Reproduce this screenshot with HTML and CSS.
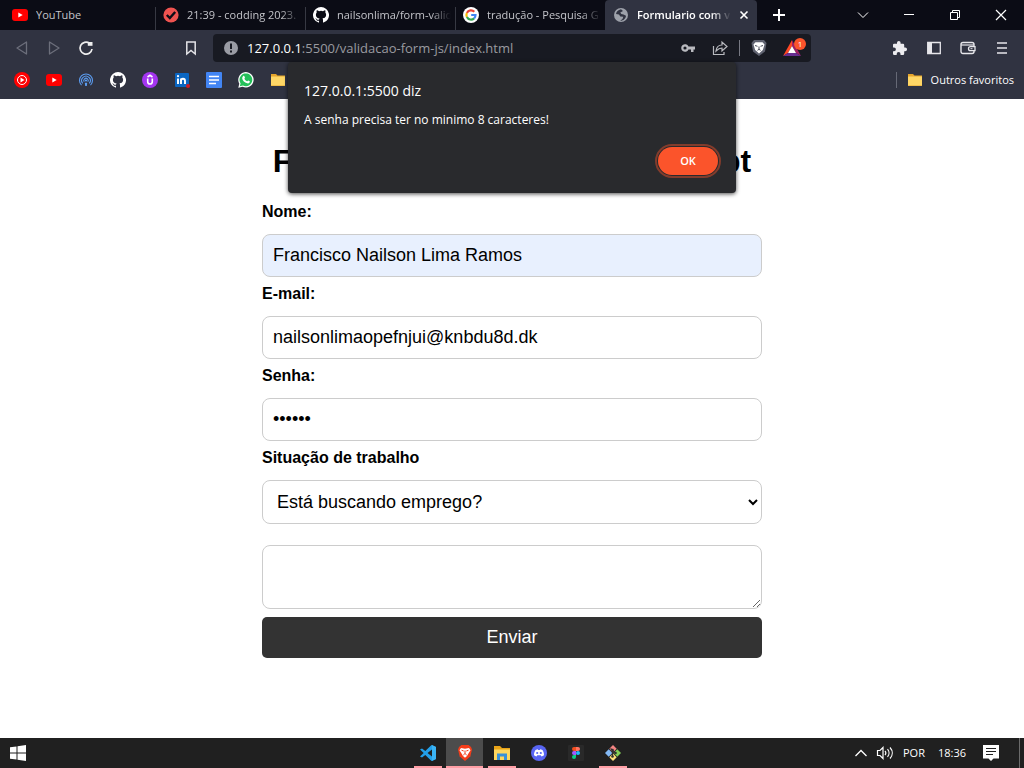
FILE: index.html
```html
<!DOCTYPE html>
<html lang="pt-BR">
<head>
<meta charset="utf-8">
<meta name="viewport" content="width=device-width, initial-scale=1">
<title>Formulario com validação</title>
<link rel="stylesheet" href="styles.css">
</head>
<body>
<header class="browser">
  <div class="tabstrip">
    <div class="tabs" role="tablist">
      <button class="tab tab-first" role="tab">
        <svg class="icon" viewBox="0 0 16 16"><rect y="2" width="16" height="12" rx="3" fill="#f00"/><path d="M6.3 5.5v5l4.4-2.5z" fill="#fff"/></svg>
        <span class="tab-title">YouTube</span>
      </button>
      <button class="tab" role="tab">
        <svg class="icon" viewBox="0 0 16 16"><circle cx="8" cy="8" r="7.6" fill="#ef5350"/><path d="M3.8 8l3 3 5.4-6" fill="none" stroke="#0c0d16" stroke-width="2.4"/></svg>
        <span class="tab-title fade">21:39 - codding 2023.</span>
      </button>
      <button class="tab" role="tab">
        <svg class="icon" viewBox="0 0 16 16"><path fill="#fff" d="M8 0a8 8 0 0 0-2.53 15.59c.4.07.55-.17.55-.38v-1.49C3.8 14.2 3.33 12.78 3.33 12.78c-.36-.92-.89-1.17-.89-1.17-.72-.5.06-.48.06-.48.8.05 1.22.82 1.22.82.71 1.22 1.87.87 2.33.66.07-.52.28-.87.5-1.07-1.77-.2-3.64-.89-3.64-3.95 0-.87.31-1.59.82-2.15-.08-.2-.36-1.02.08-2.12 0 0 .67-.21 2.2.82a7.7 7.7 0 0 1 4 0c1.53-1.04 2.2-.82 2.2-.82.44 1.1.16 1.92.08 2.12.51.56.82 1.27.82 2.15 0 3.07-1.87 3.75-3.65 3.95.29.25.54.73.54 1.48v2.19c0 .21.15.46.55.38A8 8 0 0 0 8 0z"/></svg>
        <span class="tab-title fade">nailsonlima/form-valid</span>
      </button>
      <button class="tab" role="tab">
        <svg class="icon" viewBox="0 0 16 16"><circle cx="8" cy="8" r="8" fill="#fff"/><g fill="none" stroke-width="2.2"><path d="M11.3 4.8A4.6 4.6 0 0 0 3.9 5.9" stroke="#ea4335"/><path d="M3.9 5.9a4.6 4.6 0 0 0 0 4.2" stroke="#fbbc05"/><path d="M3.9 10.1a4.6 4.6 0 0 0 7.2 1.3" stroke="#34a853"/><path d="M11.1 11.4A4.6 4.6 0 0 0 12.5 8H8.2" stroke="#4285f4"/></g></svg>
        <span class="tab-title fade">tradução - Pesquisa G</span>
      </button>
      <button class="tab tab-active" role="tab" aria-selected="true">
        <svg class="icon" viewBox="0 0 16 16"><circle cx="8" cy="8" r="7" fill="#9da1aa"/><path d="M8 2.2C5 3 3.5 4.500 3 7l3 .6 1.300 2 3 .2-.8 2.200-2.300 1.800c3 .2 5.600-2.200 5.800-5L10.500 7.600 8.300 7l-1-1.500L10 4z" fill="#303341"/></svg>
        <span class="tab-title fade">Formulario com v</span>
        <svg class="tab-close" viewBox="0 0 10 10"><path d="M1.500 1.500l7 7M8.500 1.500l-7 7" stroke="#fff" stroke-width="1.600"/></svg>
      </button>
    </div>
    <button class="new-tab" aria-label="Nova guia"><svg class="icon" viewBox="0 0 16 16"><path d="M8 2v12M2 8h12" stroke="#fff" stroke-width="2"/></svg></button>
    <div class="window-controls">
      <button aria-label="Pesquisar guias"><svg class="icon" viewBox="0 0 16 16"><path d="M3 5.500l5 5 5-5" fill="none" stroke="#fff"/></svg></button>
      <button aria-label="Minimizar"><svg class="icon" viewBox="0 0 16 16"><path d="M3 7.500h10" stroke="#fff"/></svg></button>
      <button aria-label="Restaurar"><svg class="icon" viewBox="0 0 16 16"><path d="M3.500 5.500h7v7h-7zM5.500 5.500v-2h7v7h-2" fill="none" stroke="#fff"/></svg></button>
      <button aria-label="Fechar"><svg class="icon" viewBox="0 0 16 16"><path d="M3 3l10 10M13 3L3 13" stroke="#fff" stroke-width="1.200"/></svg></button>
    </div>
  </div>

  <div class="toolbar">
    <div class="nav">
      <button aria-label="Voltar"><svg class="icon" viewBox="0 0 16 16"><path d="M12.500 2v12L3 8z" fill="none" stroke="#6c6f7b" stroke-width="1.300" stroke-linejoin="round"/></svg></button>
      <button aria-label="Avançar"><svg class="icon" viewBox="0 0 16 16"><path d="M3.500 2v12L13 8z" fill="none" stroke="#6c6f7b" stroke-width="1.300" stroke-linejoin="round"/></svg></button>
      <button aria-label="Recarregar"><svg class="icon" viewBox="0 0 16 16"><path d="M11.500 3.200A6 6 0 1 0 14 9" fill="none" stroke="#eee" stroke-width="1.700"/><path d="M9.800 5.800V2h4.700v3.800z" fill="#eee"/></svg></button>
    </div>
    <button class="bookmark-toggle" aria-label="Adicionar favorito"><svg class="icon" viewBox="0 0 16 16"><path d="M3.800 2h8.400v12L8 10.500 3.800 14z" fill="none" stroke="#e4e4e7" stroke-width="1.500"/></svg></button>
    <div class="address">
      <svg class="icon" viewBox="0 0 16 16"><circle cx="8" cy="8" r="7" fill="#9a9ca4"/><path d="M7 3.500h2V9H7zM7 10.500h2v2H7z" fill="#181a22"/></svg>
      <span class="url"><span class="host">127.0.0.1</span>:5500/validacao-form-js/index.html</span>
      <button aria-label="Senhas"><svg class="icon" viewBox="0 0 16 16"><path fill="#b9babf" fill-rule="evenodd" d="M8.500 6.500A3.800 3.800 0 1 0 8.500 9.500H11V12h2.500V9.500H15v-3zM5 6.400a1.600 1.600 0 1 1 0 3.200 1.600 1.600 0 0 1 0-3.200z"/></svg></button>
      <button aria-label="Compartilhar"><svg class="icon" viewBox="0 0 16 16"><path d="M1.500 6v8.500H12V12" fill="none" stroke="#b9babf" stroke-width="1.200"/><path d="M10 5V2l5 4.500L10 11V8C7.500 8 6 9 4 11c.5-4 3-6 6-6z" fill="none" stroke="#b9babf" stroke-width="1.200"/></svg></button>
      <span class="divider"></span>
      <button aria-label="Brave Shields"><svg class="icon" viewBox="0 0 16 16"><path d="M3 0h10l2.500 3-1.500 8.500L8 16l-6-4.500L.5 3z" fill="#5f6270"/><path d="M4.500 2.300h7l2 2.200-1.700 5.500L8 13.500 4.200 10 2.500 4.500z" fill="#fff"/><path d="M4 5.500l2.500.8M12 5.500l-2.500.8M8 6.500v2.500M6.500 10.300L8 9.300l1.500 1" stroke="#484b58" fill="none"/></svg></button>
      <button class="rewards" aria-label="Brave Rewards"><svg class="rewards-icon" viewBox="0 0 18 16"><path d="M9 0L0 16l5-3 4-7z" fill="#ff4724"/><path d="M9 0l9 16-5-3-4-7z" fill="#9e1f63"/><path d="M0 16h18l-5-3H5z" fill="#662d91"/><path d="M9 6l4 7H5z" fill="#fff"/></svg><span class="badge">1</span></button>
    </div>
    <div class="actions">
      <button aria-label="Extensões"><svg class="icon" viewBox="0 0 16 16"><path d="M13.200 7.500h-1V5A1.300 1.300 0 0 0 11 3.700H8.600V2.800a1.800 1.800 0 0 0-3.600 0v.9H2.200A1.200 1.200 0 0 0 1 5v2.400h1a1.900 1.900 0 0 1 0 3.800H1v2.500A1.300 1.300 0 0 0 2.200 15h2.500v-1a1.900 1.900 0 0 1 3.800 0v1H11a1.300 1.300 0 0 0 1.200-1.300v-2.500h1a1.850 1.850 0 0 0 0-3.700z" fill="#ececef"/></svg></button>
      <button aria-label="Barra lateral"><svg class="icon" viewBox="0 0 16 16"><path d="M1.700 2.500h12.600v11H1.700z" fill="none" stroke="#e6e6ea" stroke-width="1.300"/><path d="M2 3h4v10H2z" fill="#e6e6ea"/></svg></button>
      <button aria-label="Carteira"><svg class="icon" viewBox="0 0 16 16"><rect x="1" y="2.500" width="13" height="11" rx="2" fill="none" stroke="#e6e6ea" stroke-width="1.400"/><path d="M1 5h13" stroke="#e6e6ea" stroke-width="1.200"/><path d="M15 6.700h-4.500a2 2 0 0 0 0 4H15z" fill="#303341" stroke="#e6e6ea" stroke-width="1.300"/><path d="M10.500 8.700h2" stroke="#e6e6ea"/></svg></button>
      <button aria-label="Menu"><svg class="icon" viewBox="0 0 16 16"><path d="M3 3h10M3 8h10M3 13h10" stroke="#e6e6ea" stroke-width="1.400"/></svg></button>
    </div>
  </div>

  <nav class="bookmarks" aria-label="Favoritos">
    <a href="#" aria-label="YouTube Music"><svg class="icon" viewBox="0 0 16 16"><circle cx="8" cy="8" r="8" fill="#f00"/><circle cx="8" cy="8" r="4.500" fill="none" stroke="#fff"/><path d="M6.500 5.500v5l4-2.500z" fill="#fff"/></svg></a>
    <a href="#" aria-label="YouTube"><svg class="icon" viewBox="0 0 16 16"><rect y="2" width="16" height="12" rx="3" fill="#f00"/><path d="M6.300 5.500v5l4.400-2.500z" fill="#fff"/></svg></a>
    <a href="#" aria-label="Podcasts"><svg class="icon" viewBox="0 0 16 16"><g fill="none" stroke="#5b9cf0" stroke-width="1.100"><path d="M3.500 13.200a6.500 6.500 0 1 1 9 0M4.700 11.300a4.300 4.300 0 1 1 6.600 0"/><path d="M6.200 9.700a2.200 2.200 0 1 1 3.600 0"/></g><circle cx="8" cy="8.500" r="1.100" fill="#5b9cf0"/><path d="M6.800 10.800h2.400L8.800 14H7.200z" fill="#5b9cf0"/></svg></a>
    <a href="#" aria-label="GitHub"><svg class="icon" viewBox="0 0 16 16"><path fill="#fff" d="M8 0a8 8 0 0 0-2.53 15.59c.4.07.55-.17.55-.38v-1.49C3.8 14.2 3.33 12.78 3.33 12.78c-.36-.92-.89-1.17-.89-1.17-.72-.5.06-.48.06-.48.8.05 1.22.82 1.22.82.71 1.22 1.87.87 2.33.66.07-.52.28-.87.5-1.07-1.77-.2-3.64-.89-3.64-3.95 0-.87.31-1.59.82-2.15-.08-.2-.36-1.02.08-2.12 0 0 .67-.21 2.2.82a7.7 7.7 0 0 1 4 0c1.53-1.04 2.2-.82 2.2-.82.44 1.1.16 1.92.08 2.12.51.56.82 1.27.82 2.15 0 3.07-1.87 3.75-3.65 3.95.29.25.54.73.54 1.48v2.19c0 .21.15.46.55.38A8 8 0 0 0 8 0z"/></svg></a>
    <a href="#" aria-label="Udemy"><svg class="icon" viewBox="0 0 16 16"><circle cx="8" cy="8" r="8" fill="#a435f0"/><path d="M5.700 6.500v3.200a2.300 2.300 0 0 0 4.600 0V6.500M5.500 5L8 3.300 10.500 5" fill="none" stroke="#fff" stroke-width="1.600"/></svg></a>
    <a href="#" aria-label="LinkedIn"><svg class="icon" viewBox="0 0 16 16"><rect x="1" y="1" width="14" height="14" rx="1" fill="#0a66c2"/><path d="M4 6.500V12M7 12V6.500M7 9c0-3 4-3 4 0v3" fill="none" stroke="#fff" stroke-width="1.900"/><circle cx="4" cy="4.200" r="1.100" fill="#fff"/><circle cx="14" cy="14" r="2" fill="#cf1b24"/></svg></a>
    <a href="#" aria-label="Documentos"><svg class="icon" viewBox="0 0 16 16"><rect width="16" height="16" rx="1" fill="#4285f4"/><path d="M3 4.500h10M3 8h10M3 11.500h7" stroke="#fff" stroke-width="1.500"/></svg></a>
    <a href="#" aria-label="WhatsApp"><svg class="icon" viewBox="0 0 16 16"><path d="M.3 15.700l1-4A7.700 7.700 0 1 1 4.500 14.700z" fill="#fff"/><path d="M1.800 14.200l.8-2.800A6.400 6.400 0 1 1 5 13.500z" fill="#25c05a"/><path d="M5 4.200c.7-.6 1.300-.4 1.500.2l.5 1.300c0 .5-.6.700-.6 1.100.5 1.200 1.400 2 2.600 2.500.5 0 .8-.9 1.300-.8l1.500.8c.3 1.500-1.200 2.400-2.600 2C6.500 10.600 4.600 8.500 4.200 6.500c0-.9.200-1.600.8-2.300z" fill="#fff"/></svg></a>
    <a href="#" aria-label="Pasta"><svg class="icon" viewBox="0 0 16 16"><path d="M1 2h5l1.500 1.500H15v10.500H1z" fill="#e6a52c"/><path d="M1 4.500h14v9H1z" fill="#ffd766"/></svg></a>
    <a href="#" class="other"><svg class="icon" viewBox="0 0 16 16"><path d="M1 2h5l1.500 1.500H15v10.500H1z" fill="#e6a52c"/><path d="M1 4.500h14v9H1z" fill="#ffd766"/></svg><span>Outros favoritos</span></a>
  </nav>

  <div class="alert" role="alertdialog" aria-labelledby="alert-title" aria-describedby="alert-text">
    <h2 class="alert-title" id="alert-title">127.0.0.1:5500 diz</h2>
    <p class="alert-text" id="alert-text">A senha precisa ter no minimo 8 caracteres!</p>
    <button class="alert-ok">OK</button>
  </div>
</header>

<main class="page">
  <form class="form">
    <h1>Formulario Validado JavaScript</h1>
    <label for="nome">Nome:</label>
    <input class="field autofilled" id="nome" type="text" value="Francisco Nailson Lima Ramos">
    <label for="email">E-mail:</label>
    <input class="field" id="email" type="email" value="nailsonlimaopefnjui@knbdu8d.dk">
    <label for="senha">Senha:</label>
    <input class="field" id="senha" type="password" value="123456">
    <label for="situacao">Situação de trabalho</label>
    <select class="field" id="situacao"><option>Está buscando emprego?</option></select>
    <textarea class="field message" aria-label="Mensagem"></textarea>
    <button class="submit" type="submit">Enviar</button>
  </form>
</main>

<footer class="taskbar">
  <button class="start" aria-label="Iniciar"><svg class="icon" viewBox="0 0 16 16"><path d="M0 2.300L6.500 1.400V7.500H0zM7.500 1.200L16 0v7.500H7.500zM0 8.500h6.500v6.100L0 13.700zM7.500 8.500H16V16l-8.500-1.200z" fill="#fff"/></svg></button>
  <div class="apps">
    <button class="app running" aria-label="Visual Studio Code"><svg class="icon" viewBox="0 0 16 16"><path d="M11.500 0L16 2v12l-4.500 2L5.300 10 2 12.500 0 11.500 3.700 8 0 4.500 2 3.500 5.300 6zM12 4.600L7.500 8l4.500 3.400z" fill="#23a0ea"/><path d="M12 0l4 2v12l-4 2z" fill="#3bb4f5"/></svg></button>
    <button class="app running current" aria-label="Brave"><svg class="icon" viewBox="0 0 16 16"><path d="M4.500 0h7l2.500 2 1 2.500-1.700 7L8 16l-5.300-4.500L1 4.500 2 2z" fill="#f43d1a"/><path d="M4 3l4 .7 4-.7 1.500 2.200-2.200 3.500L10 11l-2 1.800L6 11 4.700 8.700 2.500 5.200z" fill="#fff"/><path d="M4.500 5.200l2.200.8M11.500 5.200L9.300 6M8 5.500v3L6.300 10M8 8.500L9.700 10" stroke="#f43d1a" fill="none"/></svg></button>
    <button class="app running" aria-label="Explorador de Arquivos"><svg class="icon" viewBox="0 0 16 16"><path d="M0 1h6l2 2h8v12H0z" fill="#e8a317"/><path d="M0 4.500h16V15H0z" fill="#ffd75e"/><path d="M3 15V8.500h10V15h-3v-3.500H6V15z" fill="#3a91d8"/></svg></button>
    <button class="app" aria-label="Discord"><svg class="icon" viewBox="0 0 16 16"><circle cx="8" cy="8" r="8" fill="#5865f2"/><path d="M4.500 5c1-.7 1.700-.8 2.200-.8l.4.700h1.800l.4-.7c.500 0 1.200.1 2.200.8 1 1.500 1.600 3.300 1.500 5.300-.8.700-1.700 1-2.500 1.200l-.8-1.200H6.300l-.8 1.200C4.700 11.300 3.800 11 3 10.300 2.900 8.300 3.500 6.500 4.500 5z" fill="#fff"/><circle cx="6.200" cy="8" r="1.100" fill="#5865f2"/><circle cx="9.800" cy="8" r="1.100" fill="#5865f2"/></svg></button>
    <button class="app" aria-label="Figma"><svg class="icon" viewBox="0 0 16 16"><rect width="16" height="16" rx="1" fill="#292929"/><path d="M8 2H6a2 2 0 0 0 0 4h2z" fill="#f24e1e"/><path d="M8 2h2a2 2 0 0 1 0 4H8z" fill="#ff7262"/><path d="M8 6H6a2 2 0 0 0 0 4h2z" fill="#a259ff"/><circle cx="10" cy="8" r="2" fill="#1abcfe"/><path d="M8 10H6a2 2 0 1 0 2 2z" fill="#0acf83"/></svg></button>
    <button class="app running" aria-label="Git Bash"><svg class="icon" viewBox="0 0 16 16"><path d="M8 0l3.700 3.700L8 7.400 4.300 3.700z" fill="#f28482"/><path d="M12.300 4.300L16 8l-3.700 3.700L8.600 8z" fill="#84cf57"/><path d="M8 8.600l3.700 3.700L8 16l-3.700-3.700z" fill="#ffe17a"/><path d="M3.700 4.300L7.400 8l-3.700 3.700L0 8z" fill="#84b9f5"/><path d="M5.500 3.500L10.500 8M7.500 5v7" stroke="#303030" stroke-width="1.200"/><g fill="#303030"><circle cx="7.500" cy="5" r="1.300"/><circle cx="10.500" cy="8" r="1.300"/><circle cx="7.500" cy="11.500" r="1.300"/></g></svg></button>
  </div>
  <div class="tray">
    <button aria-label="Mostrar ícones ocultos"><svg class="icon" viewBox="0 0 16 16"><path d="M2.500 11L8 5.500 13.500 11" fill="none" stroke="#fff" stroke-width="1.300"/></svg></button>
    <button aria-label="Volume"><svg class="volume" viewBox="0 0 18 16"><path d="M1.500 5.500h2.500l3-3v11l-3-3H1.500zM9 6c1 1.200 1 2.800 0 4M11.500 4.200c2 2.200 2 5.400 0 7.600M14 2.500c3 3.300 3 7.700 0 11" fill="none" stroke="#fff" stroke-width="1.200"/></svg></button>
    <span class="language">POR</span>
    <time class="clock">18:36</time>
    <button class="notifications" aria-label="Notificações"><svg class="icon" viewBox="0 0 16 16"><path d="M0 0h16v13.500h-5.500L8 16l-2.500-2.500H0z" fill="#fff"/><path d="M3 3.500h10M3 6.500h10M3 9.500h7" stroke="#202020" stroke-width="1.200"/></svg></button>
  </div>
</footer>
</body>
</html>
```

FILE: styles.css
```css
* {
  box-sizing: border-box;
}

body {
  margin: 0;
  min-height: 100vh;
  display: flex;
  flex-direction: column;
  background: #fff;
  color: #000;
  font-family: "Liberation Sans", Arial, sans-serif;
}

.icon {
  display: block;
  flex: none;
  width: 16px;
  height: 16px;
}

.browser,
.taskbar {
  font-family: "Open Sans", "Noto Sans", sans-serif;
  font-size: 11px;
  line-height: 16px;
  color: #fff;
}

.browser button,
.taskbar button {
  display: flex;
  align-items: center;
  justify-content: center;
  padding: 0;
  border: 0;
  background: none;
  color: inherit;
  font: inherit;
}

.browser {
  position: relative;
  background: #303341;
}

/* Tabs */

.tabstrip {
  display: flex;
  height: 30px;
  background: #0b0c15;
}

.tabs {
  display: flex;
  min-width: 0;
}

.browser .tab {
  width: 150px;
  min-width: 0;
  gap: 8px;
  padding: 0 4px 0 8px;
  justify-content: flex-start;
  color: #c3c4c9;
  background: linear-gradient(#373943, #373943) left bottom / 1px 23px no-repeat;
}

.browser .tab-first {
  width: 155px;
  padding-left: 12px;
  background: none;
}

.browser .tab-active {
  width: 152px;
  padding: 0 8px;
  background: #303341;
  border-radius: 4px 4px 0 0;
  color: #fff;
  font-weight: 600;
}

.tab-title {
  flex: 1;
  min-width: 0;
  overflow: hidden;
  text-align: left;
  white-space: nowrap;
}

.fade {
  -webkit-mask-image: linear-gradient(to left, transparent, #000 20px);
  mask-image: linear-gradient(to left, transparent, #000 20px);
}

.tab-close {
  flex: none;
  width: 10px;
  height: 10px;
}

.browser .new-tab {
  width: 44px;
}

.window-controls {
  display: flex;
  margin-left: auto;
}

.window-controls button {
  width: 46px;
}

/* Toolbar */

.toolbar {
  display: flex;
  align-items: center;
  padding: 4px 14px 0;
}

.nav {
  display: flex;
  gap: 16px;
}

.browser .bookmark-toggle {
  margin-left: 89px;
}

.address {
  flex: 1;
  display: flex;
  align-items: center;
  height: 28px;
  margin: 0 81px 0 14px;
  padding: 0 10px;
  border-radius: 4px;
  background: #181a22;
}

.url {
  flex: 1;
  min-width: 0;
  margin-left: 8px;
  overflow: hidden;
  white-space: nowrap;
  font-size: 13px;
  line-height: 20px;
  color: #9a9ba0;
}

.host {
  color: #fff;
}

.address button {
  margin-left: 16px;
}

.divider {
  width: 1px;
  height: 16px;
  margin: 0 -5px 0 11px;
  background: #777983;
}

.browser .rewards {
  position: relative;
}

.rewards-icon {
  width: 18px;
  height: 16px;
}

.badge {
  position: absolute;
  top: -2px;
  right: -5px;
  width: 12px;
  height: 12px;
  border-radius: 6px;
  background: #fb542b;
  font-size: 8px;
  line-height: 12px;
  text-align: center;
}

.actions {
  display: flex;
  gap: 18px;
}

/* Bookmarks */

.bookmarks {
  display: flex;
  align-items: center;
  gap: 16px;
  height: 37px;
  padding: 0 10px 1px 14px;
}

.bookmarks a {
  color: #fff;
  text-decoration: none;
}

.bookmarks .other {
  display: flex;
  align-items: center;
  gap: 8px;
  margin-left: auto;
  padding-left: 10px;
  border-left: 1px solid #666976;
}

/* Alert dialog */

.alert {
  position: absolute;
  top: 62px;
  left: 0;
  right: 0;
  width: 448px;
  max-width: 100%;
  margin: 0 auto;
  padding: 18px 18px 18px 16px;
  display: flex;
  flex-direction: column;
  border-radius: 4px;
  background: #292a2d;
  box-shadow: 0 1px 4px rgba(0, 0, 0, 0.7);
}

.alert-title {
  margin: 0;
  font-size: 14px;
  font-weight: 400;
  line-height: 22px;
}

.alert-text {
  margin: 9px 0 18px;
  font-size: 12px;
  line-height: 18px;
}

.browser .alert-ok {
  align-self: flex-end;
  width: 60px;
  height: 28px;
  border-radius: 14px;
  background: #fb542b;
  outline: 2px solid #823c2c;
  outline-offset: 1px;
  font-weight: 600;
}

/* Page form */

.page {
  flex: 1;
  padding: 44px 16px;
}

.form {
  display: flex;
  flex-direction: column;
  max-width: 500px;
  margin: 0 auto;
}

.form h1 {
  margin: 0 0 23px;
  font-size: 32px;
  line-height: 37px;
  text-align: center;
}

.form label {
  margin-bottom: 13px;
  font-size: 16px;
  font-weight: 700;
  line-height: 18px;
}

.field {
  width: 100%;
  height: 43px;
  margin: 0 0 8px;
  padding: 10px;
  border: 1px solid #ccc;
  border-radius: 8px;
  background: #fff;
  color: #000;
  font-family: inherit;
  font-size: 18px;
  line-height: 21px;
}

.autofilled {
  background: #e8f0fe;
}

select.field {
  height: 44px;
  margin-bottom: 21px;
}

.message {
  height: 64px;
}

.submit {
  padding: 10px;
  border: 0;
  border-radius: 5px;
  background: #333;
  color: #fff;
  font-family: inherit;
  font-size: 18px;
  line-height: 21px;
}

/* Taskbar */

.taskbar {
  display: grid;
  grid-template-columns: 1fr auto 1fr;
  height: 30px;
  background: #202020;
}

.taskbar .start {
  width: 36px;
}

.apps {
  display: flex;
  padding-left: 16px;
}

.taskbar .app {
  width: 37px;
}

.taskbar .running {
  background: linear-gradient(#ff9ea5, #ff9ea5) center bottom / 28px 2px no-repeat;
}

.taskbar .current {
  background: linear-gradient(#ff9ea5, #ff9ea5) center bottom / 100% 2px no-repeat #4c4c4c;
}

.tray {
  display: flex;
  align-items: center;
  justify-content: flex-end;
  margin-right: 4px;
  border-right: 1px solid #6b6b6b;
}

.volume {
  display: block;
  width: 18px;
  height: 16px;
  margin-left: 7px;
}

.language {
  margin-left: 9px;
}

.clock {
  margin-left: 13px;
}

.taskbar .notifications {
  margin: 0 20px 0 17px;
}
```
